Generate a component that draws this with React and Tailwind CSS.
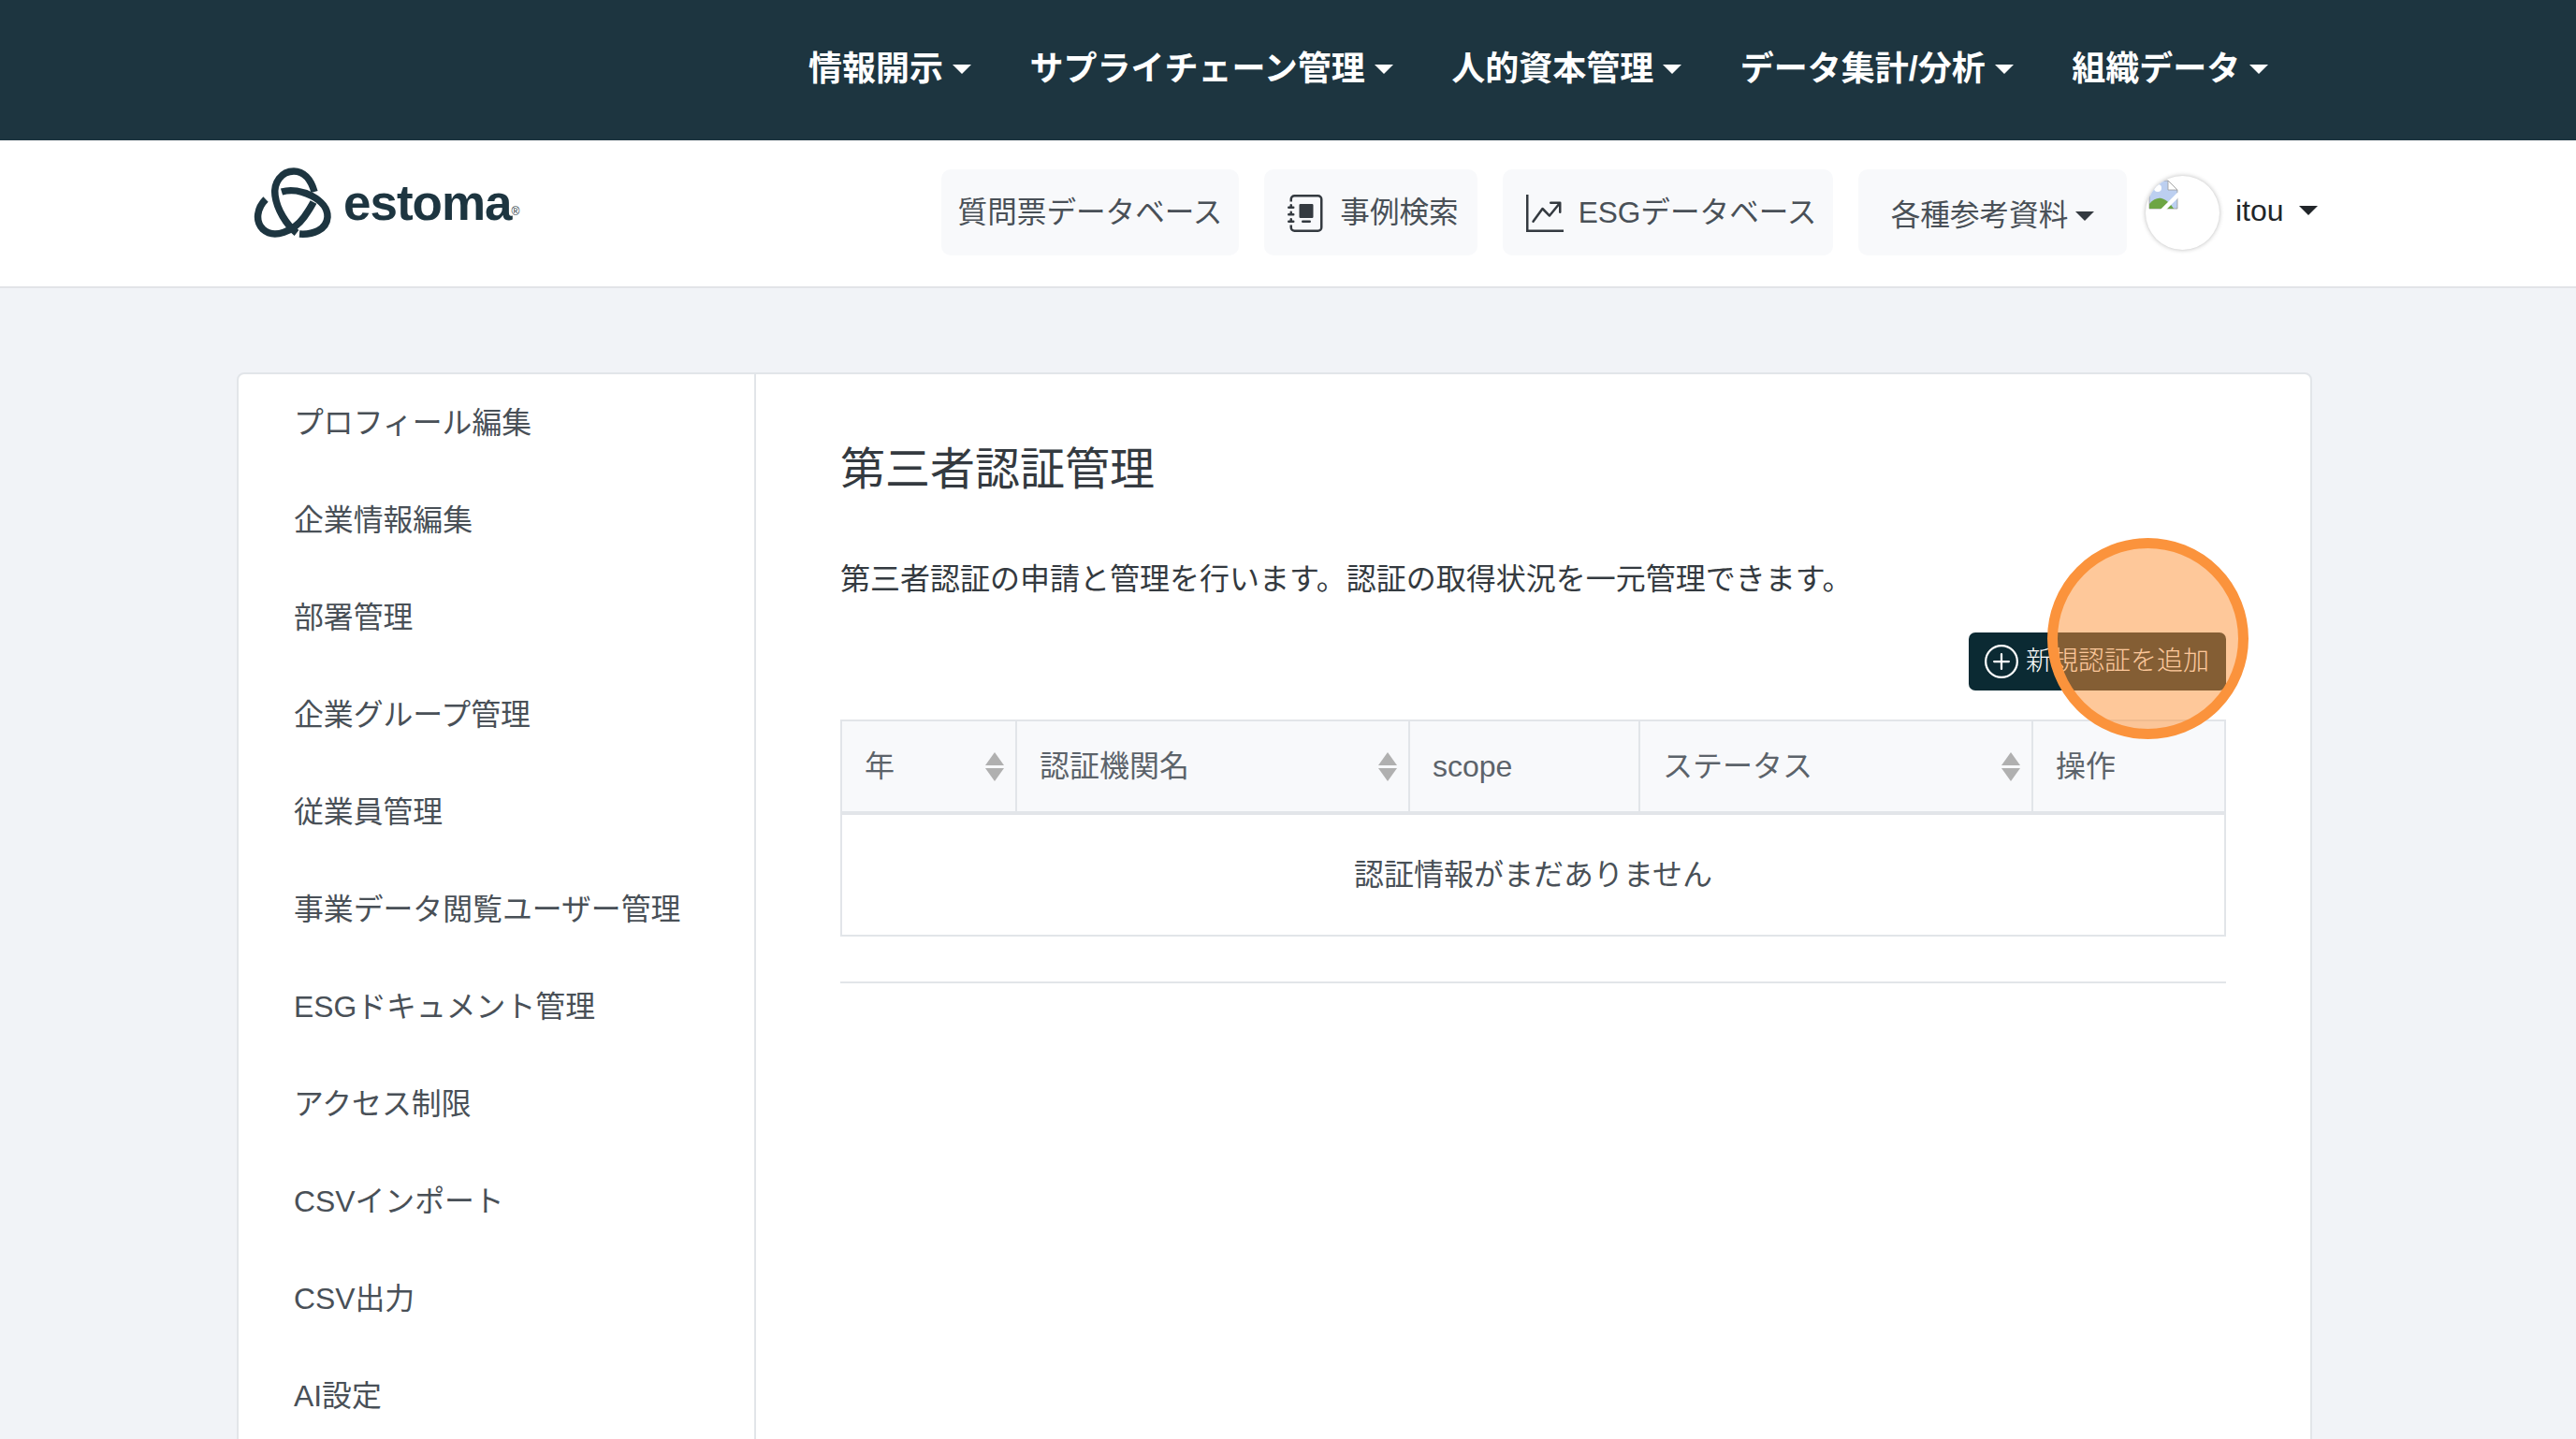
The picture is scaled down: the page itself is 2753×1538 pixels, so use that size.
import React from 'react';
import { BsGraphUpArrow, BsJournalAlbum, BsPlusCircle } from 'react-icons/bs';

const navItems = ['情報開示', 'サプライチェーン管理', '人的資本管理', 'データ集計/分析', '組織データ'];

const sideItems = [
  'プロフィール編集',
  '企業情報編集',
  '部署管理',
  '企業グループ管理',
  '従業員管理',
  '事業データ閲覧ユーザー管理',
  'ESGドキュメント管理',
  'アクセス制限',
  'CSVインポート',
  'CSV出力',
  'AI設定',
];

const Caret = ({ className }) => (
  <span className={`inline-block h-0 w-0 border-x-[10px] border-t-[10px] border-x-transparent ${className}`} />
);

const Logo = () => (
  <svg width="100" height="90" viewBox="0 0 100 90" fill="none" stroke="#1d3540" strokeWidth="7.5">
    <path d="M71 33C67 19 59 11 49 11C36 11 27 23 29 37C31 52 41 68 52 77" />
    <path d="M36 33C56 27 86 42 85 60C84 74 69 79 55 78" />
    <path d="M19 41C10 50 7 64 16 73C28 84 49 75 60 60C67 50 70 44 70 44" />
  </svg>
);

const BrokenImage = () => (
  <svg width="32" height="32" viewBox="0 0 32 32" className="absolute left-[3px] top-[4px]">
    <path d="M1 1H21L31 11V31H1Z" fill="#bccff0" stroke="#9a9a9a" strokeWidth="0.8" />
    <path d="M21 1V11H31Z" fill="#ffffff" stroke="#9a9a9a" strokeWidth="0.8" />
    <path d="M1 31V26C5 21 10 19 14 20C20 22 24 26 27 31Z" fill="#6da544" />
    <circle cx="10" cy="9" r="4" fill="#ffffff" />
    <path d="M13 35L33 15" stroke="#ffffff" strokeWidth="4.5" />
  </svg>
);

const Pill = ({ className = '', children }) => (
  <div className={`flex h-[92px] items-center rounded-[10px] bg-[#f8f9fb] text-[31.6px] text-[#495057] ${className}`}>
    {children}
  </div>
);

const SortArrows = () => (
  <span className="ml-auto flex flex-col items-center gap-[3px]">
    <span className="h-0 w-0 border-x-[10px] border-b-[14px] border-x-transparent border-b-[#b0b0b0]" />
    <span className="h-0 w-0 border-x-[10px] border-t-[14px] border-x-transparent border-t-[#b0b0b0]" />
  </span>
);

const HeadCell = ({ label, sortable, className = '' }) => (
  <div className={`flex items-center border-r-2 border-[#e2e5e9] pl-[24px] pr-[12px] ${className}`}>
    <span>{label}</span>
    {sortable ? <SortArrows /> : null}
  </div>
);

export default function App() {
  return (
    <div className="relative h-[1538px] overflow-hidden bg-[#f1f3f7] font-['Liberation_Sans','Noto_Sans_CJK_JP',sans-serif]">
      <nav className="flex h-[150px] items-center gap-[62.5px] bg-[#1d3540] pb-[2px] pl-[864px] text-[36px] font-semibold text-white">
        {navItems.map((item) => (
          <div key={item} className="flex items-center gap-[10px]">
            <span>{item}</span>
            <Caret className="border-t-white" />
          </div>
        ))}
      </nav>

      <header className="flex h-[158px] items-center border-b-2 border-[#e2e4e8] bg-white pb-[2px]">
        <div className="ml-[265px] -mt-[20px] flex w-[741px] items-center">
          <Logo />
          <span className="-mt-[2px] ml-[2px] text-[53px] font-bold leading-none tracking-[-1px] text-[#1d3540]">estoma</span>
          <span className="mt-[18px] text-[12px] leading-none text-[#1d3540]">®</span>
        </div>
        <div className="flex items-center">
          <Pill className="w-[318px] justify-center pt-[2px]">質問票データベース</Pill>
          <Pill className="ml-[27px] w-[228px] justify-center gap-[16px] pl-[5px] pt-[2px]">
            <BsJournalAlbum className="size-[40px] text-[#343a40]" />
            <span>事例検索</span>
          </Pill>
          <Pill className="ml-[27px] w-[353px] justify-center gap-[16px] pl-[7px] pt-[2px]">
            <BsGraphUpArrow className="size-[40px] text-[#343a40]" />
            <span>ESGデータベース</span>
          </Pill>
          <Pill className="ml-[27px] w-[287px] justify-center gap-[8px] pt-[8px]">
            <span>各種参考資料</span>
            <Caret className="border-t-[#343a40]" />
          </Pill>
          <div className="relative ml-[20px] size-[79px] overflow-hidden rounded-full bg-white shadow-[0_0_5px_rgba(0,0,0,0.28)]">
            <BrokenImage />
          </div>
          <span className="ml-[17px] -mt-[4px] text-[32px] text-[#212529]">itou</span>
          <Caret className="ml-[16px] -mt-[4px] border-t-[#212529]" />
        </div>
      </header>

      <main className="ml-[253px] mt-[90px] flex h-[1200px] w-[2218px] rounded-t-[8px] border-2 border-[#e2e5e9] bg-white">
        <aside className="w-[553px] shrink-0 border-r-2 border-[#e2e5e9] pt-[1px]">
          {sideItems.map((item) => (
            <div key={item} className="flex h-[104px] items-center pl-[59px] text-[31.85px] text-[#495057]">
              {item}
            </div>
          ))}
        </aside>

        <section className="w-[1571px] pl-[90px] pt-[70px]">
          <h1 className="text-[48px] leading-[64px] text-[#343a40]">第三者認証管理</h1>
          <p className="mt-[62px] text-[32px] leading-[46px] text-[#343a40]">
            第三者認証の申請と管理を行います。認証の取得状況を一元管理できます。
          </p>
          <div className="mt-[34px] flex justify-end">
            <button
              type="button"
              className="flex h-[62px] w-[275px] items-center gap-[8px] rounded-[7px] bg-[#0b2a33] pl-[17px] text-[28px] font-light text-white"
            >
              <BsPlusCircle className="size-[36px]" />
              <span>新規認証を追加</span>
            </button>
          </div>

          <div className="mt-[31px] w-[1481px] border-2 border-[#e2e5e9] text-[32px] text-[#5c636a]">
            <div className="flex h-[100px] border-b-4 border-[#e2e5e9] bg-[#f8f9fb]">
              <HeadCell label="年" sortable className="w-[187px]" />
              <HeadCell label="認証機関名" sortable className="w-[420px]" />
              <HeadCell label="scope" className="w-[246px]" />
              <HeadCell label="ステータス" sortable className="w-[420px]" />
              <div className="flex items-center pl-[24px]">操作</div>
            </div>
            <div className="flex h-[128px] items-center justify-center text-[#495057]">認証情報がまだありません</div>
          </div>
          <hr className="mt-[48px] w-[1481px] border-t-2 border-[#e2e5e9]" />
        </section>
      </main>

      <div className="absolute left-[2188px] top-[575px] size-[215px] rounded-full border-[11px] border-[#fb933c] bg-[#fd9135]/50" />
    </div>
  );
}
